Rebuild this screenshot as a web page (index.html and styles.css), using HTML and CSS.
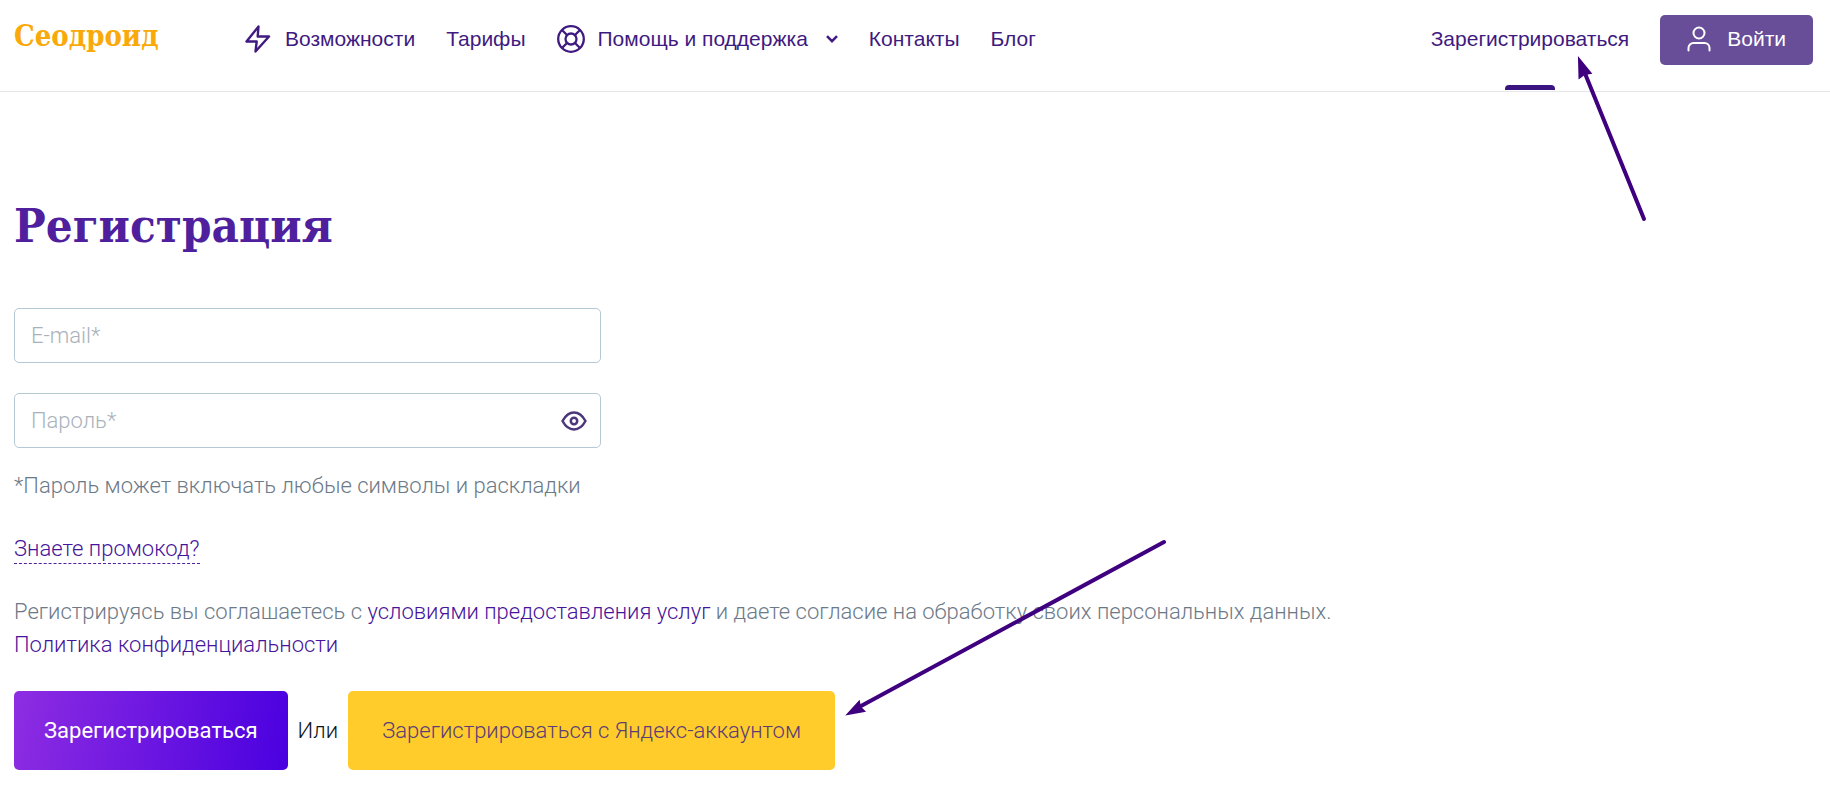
FILE: index.html
```html
<!DOCTYPE html>
<html lang="ru">
<head>
<meta charset="utf-8">
<meta name="viewport" content="width=device-width, initial-scale=1">
<title>Регистрация — Сеодроид</title>
<link rel="stylesheet" href="styles.css">
</head>
<body>
<header class="header">
  <a class="logo" href="#">Сеодроид</a>
  <nav class="nav">
    <a class="nav-link" href="#">
      <svg class="icon" width="28" height="28" viewBox="0 0 28 28" fill="none" stroke="currentColor" stroke-width="2.400" stroke-linejoin="round"><path d="M14.500 1.500 2.500 16.500H12.700L11.500 26.500 25 11.500H13.700Z"/></svg>
      Возможности
    </a>
    <a class="nav-link" href="#">Тарифы</a>
    <a class="nav-link" href="#">
      <svg class="icon" width="28" height="28" viewBox="0 0 28 28" fill="none" stroke="currentColor" stroke-width="2.300"><circle cx="14" cy="14" r="12.800"/><circle cx="14" cy="14" r="5.500"/><path d="m5 5 5 5M23 5l-5 5M5 23l5-5M23 23l-5-5"/></svg>
      Помощь и поддержка
      <svg class="chevron" width="12" height="8" viewBox="0 0 12 8" fill="none" stroke="currentColor" stroke-width="2.500"><path d="m1 1.200 5 5 5-5"/></svg>
    </a>
    <a class="nav-link" href="#">Контакты</a>
    <a class="nav-link" href="#">Блог</a>
  </nav>
  <div class="account">
    <a class="nav-link current" href="#">Зарегистрироваться
      <svg class="arrow arrow-up" width="74" height="170" viewBox="0 0 74 170"><path class="arrow-line" d="m10 16 60 148"/><path class="arrow-head" d="m5 4 11.500 14-6 1-5 3.500Z"/></svg>
    </a>
    <button class="login" type="button">
      <svg width="24" height="26" viewBox="0 0 24 26" fill="none" stroke="currentColor" stroke-width="2" stroke-linecap="round"><circle cx="12" cy="7" r="5.500"/><path d="M1.500 24.500V22a5 5 0 0 1 5-5h11a5 5 0 0 1 5 5v2.500"/></svg>
      Войти
    </button>
  </div>
</header>
<main class="page">
  <h1 class="title">Регистрация</h1>
  <form class="form">
    <div class="field"><input class="input" type="email" placeholder="E-mail*" aria-label="E-mail"></div>
    <div class="field">
      <input class="input" type="password" placeholder="Пароль*" aria-label="Пароль">
      <button class="reveal" type="button" aria-label="Показать пароль">
        <svg width="26" height="20" viewBox="0 0 26 20" fill="none" stroke="currentColor" stroke-width="2.500"><path d="M1.500 10C4.500 4.500 8.500 1.500 13 1.500S21.500 4.500 24.500 10c-3 5.500-7 8.500-11.500 8.500S4.500 15.500 1.500 10Z" stroke-linejoin="round"/><circle cx="13" cy="10" r="3.200"/></svg>
      </button>
    </div>
    <p class="hint">*Пароль может включать любые символы и раскладки</p>
    <p class="text"><a class="promo" href="#">Знаете промокод?</a></p>
    <p class="text">Регистрируясь вы соглашаетесь с <a class="link" href="#">условиями предоставления услуг</a> и даете согласие на обработку своих персональных данных.<br><a class="link" href="#">Политика конфиденциальности</a></p>
    <div class="actions">
      <button class="button primary" type="submit">Зарегистрироваться</button>
      <span class="or">Или</span>
      <button class="button yandex" type="button">Зарегистрироваться с Яндекс-аккаунтом
        <svg class="arrow arrow-left" width="330" height="184" viewBox="0 0 330 184"><path class="arrow-line" d="M324 6 21 170"/><path class="arrow-head" d="m8 178 11-12 1 5 4 4Z"/></svg>
      </button>
    </div>
  </form>
</main>
</body>
</html>
```
FILE: styles.css
```css
* { box-sizing: border-box; }
body {
  margin: 0;
  background: #fff;
  color: #1b2733;
  font: 300 22px/33px Roboto, "Open Sans", sans-serif;
}
a { text-decoration: none; }
button { font: inherit; border: 0; cursor: pointer; }
.header {
  display: flex;
  align-items: flex-start;
  padding: 15px 17px 0 14px;
  min-height: 92px;
  border-bottom: 1px solid #e6e6ea;
  font: 21px/48px "Liberation Sans", Arial, sans-serif;
}
.logo {
  width: 230px;
  color: #f9a90a;
  font: bold 29px/42px "DejaVu Serif Condensed", "DejaVu Serif", serif;
}
.nav { display: flex; flex: 1; gap: 31px; }
.nav-link {
  display: flex;
  align-items: center;
  height: 48px;
  color: #3f1a80;
  white-space: nowrap;
}
.icon { margin-right: 13px; }
.chevron { margin-left: 18px; }
.account { display: flex; gap: 31px; }
.current { position: relative; }
.current::after {
  content: "";
  position: absolute;
  left: 50%;
  top: 70px;
  width: 50px;
  height: 5px;
  margin-left: -25px;
  border-radius: 4px 4px 0 0;
  background: #3a1480;
}
.login {
  display: flex;
  align-items: center;
  gap: 16px;
  height: 50px;
  padding: 0 27px 2px;
  border-radius: 5px;
  background: #684d99;
  color: #fff;
}
.page { padding: 104px 14px 30px; }
.title {
  margin: 0 0 52px;
  color: #4f1f9e;
  font: bold 47px/60px "DejaVu Serif Condensed", "DejaVu Serif", serif;
}
.field {
  position: relative;
  max-width: 587px;
  margin-bottom: 30px;
}
.input {
  display: block;
  width: 100%;
  height: 55px;
  padding: 0 16px;
  border: 1px solid #b5c8d6;
  border-radius: 5px;
  background: #fff;
  color: #1b2733;
  font: inherit;
}
.input::placeholder { color: #a9b2bb; opacity: 1; }
.reveal {
  position: absolute;
  right: 14px;
  top: 18px;
  display: flex;
  padding: 0;
  background: none;
  color: #4c3578;
}
.hint { margin: -9px 0 30px; color: #6c7a88; }
.text { margin: 0 0 30px; color: #6c7a88; }
.link, .promo { color: #47149a; }
.promo {
  display: inline-block;
  line-height: 28px;
  border-bottom: 1px dashed #4f1f9e;
}
.actions { display: flex; flex-wrap: wrap; align-items: center; gap: 10px; }
.or { color: #0c1420; }
.button {
  position: relative;
  height: 79px;
  padding: 0 30px;
  border-radius: 5px;
}
.primary {
  background: linear-gradient(100deg, #8e2de2, #4a00e0);
  color: #fff;
  font-weight: 400;
}
.yandex {
  min-width: 487px;
  background: #ffcc2b;
  color: #5a3d77;
}
.arrow { position: absolute; pointer-events: none; }
.arrow-up { right: -19px; top: 40px; }
.arrow-left { left: calc(100% + 5px); bottom: 50px; }
.arrow-line { fill: none; stroke: #3f007f; stroke-width: 4; stroke-linecap: round; }
.arrow-head { fill: #3f007f; stroke: #3f007f; stroke-width: 2; }
```
